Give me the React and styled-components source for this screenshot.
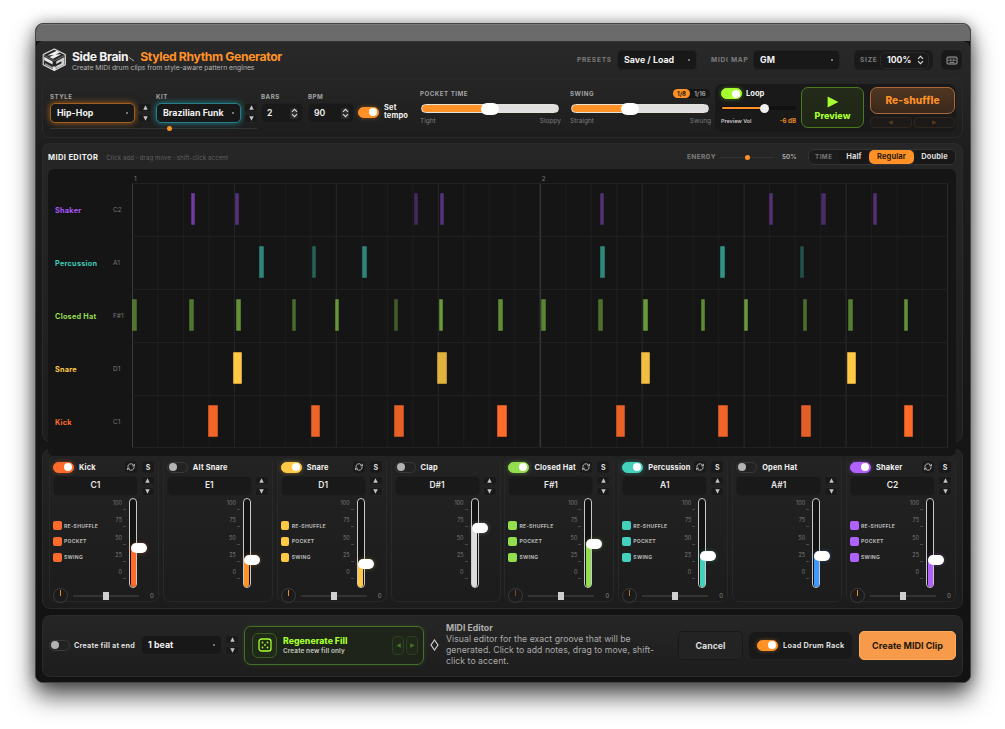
import React from "react";
import styled, { createGlobalStyle } from "styled-components";

const GlobalStyle = createGlobalStyle`
  * {
    box-sizing: border-box;
  }
  body {
    margin: 0;
    background: #ffffff;
    font-family: Inter, "Liberation Sans", sans-serif;
    color: #f2f2f2;
    overflow: hidden;
  }
  button {
    font-family: inherit;
    padding: 0;
    margin: 0;
    cursor: pointer;
  }
`;

const Desktop = styled.div`
  width: 1005px;
  height: 729px;
  padding: 23px 34px 0 35px;
  overflow: hidden;
`;

const Window = styled.div`
  height: 660px;
  border-radius: 8px;
  overflow: hidden;
  border: 1px solid #454545;
  background: #111111;
  box-shadow: 0 13px 25px rgba(0, 0, 0, 0.68), 0 0 14px rgba(0, 0, 0, 0.32);
`;

const TitleBar = styled.div`
  height: 17px;
  background: #6b6b6b;
  border-top: 1px solid #7c7c7c;
`;

const Body = styled.div`
  height: 641px;
  padding: 0 7px 0 6px;
  border-radius: 8px 8px 0 0;
  border-top: 1px solid #343434;
  background: linear-gradient(#292929, #1d1d1d 18%, #161616 60%, #121212);
`;

const Row = styled.div`
  display: flex;
  align-items: center;
`;

const Panel = styled.section`
  border: 1px solid #2a2a2a;
  border-radius: 8px;
  background: linear-gradient(#262626, #1d1d1d);
`;

/* shared controls */

const Label = styled.span`
  font-size: 6.2px;
  line-height: 8px;
  font-weight: 700;
  letter-spacing: 0.5px;
  color: #a3a3a3;
  white-space: nowrap;
`;

const Select = styled.button`
  display: flex;
  flex: none;
  align-items: center;
  justify-content: space-between;
  width: ${(p) => p.$width}px;
  height: 20px;
  padding: 0 6px 1px;
  border: 1px solid ${(p) => p.$glow || "#222222"};
  border-radius: 5px;
  background: #181818;
  color: #f2f2f2;
  font-size: 8.8px;
  font-weight: 700;
  letter-spacing: 0.04px;
  white-space: nowrap;
  box-shadow: ${(p) => (p.$glow ? `0 0 6px ${p.$glow}` : "none")};

  &::after {
    content: "";
    width: 2px;
    height: 2px;
    border-radius: 1px;
    background: #999999;
  }
`;

const StepperBox = styled.div`
  display: grid;
  grid-template-rows: 9px 9px;
  gap: 2px;
  width: 14px;
`;

const StepButton = styled.button`
  display: flex;
  align-items: center;
  justify-content: center;
  border: 1px solid #242424;
  border-radius: 3px;
  background: #191919;
`;

const Toggle = styled.span`
  display: flex;
  flex: none;
  align-items: center;
  justify-content: ${(p) => (p.$on ? "flex-end" : "flex-start")};
  width: 21px;
  height: 11px;
  padding: 0 1px;
  border: 1px solid ${(p) => (p.$on ? p.$on : "#3a3a3a")};
  border-radius: 6px;
  background: ${(p) => p.$on || "#222222"};
  box-shadow: ${(p) => (p.$on ? `0 0 4px ${p.$on}66` : "none")};

  &::after {
    content: "";
    width: 8px;
    height: 8px;
    border-radius: 4px;
    background: ${(p) => (p.$on ? "#ffffff" : "#b2b2b2")};
  }
`;

/* header */

const Header = styled(Row)`
  height: 36px;
`;

const Titles = styled.div`
  flex: none;
  margin-left: 5px;
  width: 505px;
`;

const TitleLine = styled(Row)`
  height: 15px;
  font-size: 12.2px;
  font-weight: 700;
  letter-spacing: -0.37px;
  white-space: nowrap;
`;

const Squiggle = styled.svg`
  margin: 6px 6px 0 1px;
`;

const ProductName = styled.span`
  color: #ff9126;
`;

const Subtitle = styled.div`
  font-size: 6.8px;
  line-height: 8px;
  color: #b4b4b4;
  white-space: nowrap;
`;

const HeaderLabel = styled(Label)`
  flex: none;
  font-size: 6.6px;
  width: ${(p) => p.$width}px;
  margin-left: ${(p) => p.$gap || 0}px;
  color: #7d7d7d;
  letter-spacing: ${(p) => (p.$tight ? "0.3px" : "0.75px")};
`;

const SizeBox = styled(Row)`
  flex: none;
  height: 20px;
  width: 79px;
  margin-left: 14px;
  padding-left: 5px;
  border: 1px solid #1d1d1d;
  border-radius: 5px;
  background: #1a1a1a;
`;

const SizeValue = styled(Row)`
  justify-content: space-between;
  width: 49px;
  height: 17px;
  padding: 0 4px 0 6px;
  border: 1px solid #292929;
  border-radius: 5px;
  font-size: 8.7px;
  font-weight: 700;
`;

const KeyboardButton = styled.button`
  display: flex;
  flex: none;
  align-items: center;
  justify-content: center;
  width: 21px;
  height: 20px;
  margin-left: 8px;
  border: 1px solid #1d1d1d;
  border-radius: 5px;
  background: #191919;
`;

/* controls */

const Controls = styled(Panel)`
  display: flex;
  height: 60px;
  padding-left: 7px;
`;

const SourceGroup = styled.div`
  flex: none;
  width: 208px;
  padding-top: 14px;
`;

const SourceFields = styled.div`
  display: flex;
  justify-content: space-between;
  margin-bottom: 2px;
`;

const SourceField = styled.div`
  display: flex;
  flex-direction: column;
  gap: 2px;
`;

const SourcePair = styled.div`
  display: flex;
  gap: 3px;
`;

const DotRange = styled.div`
  display: flex;
  align-items: center;
  justify-content: ${(p) => (p.$offset ? "flex-start" : "center")};
  width: ${(p) => p.$width}px;
  height: 6px;
  padding-left: ${(p) => p.$offset || 0}px;
  background: linear-gradient(#333333, #333333) center / 100% 1px no-repeat;

  &::after {
    content: "";
    width: 5px;
    height: 5px;
    border-radius: 3px;
    background: #ff9126;
  }
`;

const NumberField = styled.div`
  display: flex;
  flex: none;
  flex-direction: column;
  gap: 2px;
  margin: 14px 0 0 ${(p) => p.$gap}px;
`;

const NumberBox = styled(Row)`
  justify-content: space-between;
  width: ${(p) => p.$width}px;
  height: 20px;
  padding: 0 4px 0 5px;
  border: 1px solid #1e1e1e;
  border-radius: 5px;
  background: #191919;
  font-size: 8.7px;
  font-weight: 600;
`;

const SpinHandle = styled.span`
  display: flex;
  align-items: center;
  justify-content: center;
  width: 8px;
  height: 11px;
  border-radius: 2px;
  background: ${(p) => (p.$plain ? "transparent" : "#2c2c2c")};
`;

const TempoToggle = styled(Row)`
  flex: none;
  gap: 5px;
  height: 22px;
  margin: 22px 0 0 4px;
  width: 62px;
  font-size: 7.5px;
  line-height: 8.2px;
  font-weight: 700;
  letter-spacing: 0.15px;
`;

const FeelGroup = styled.div`
  flex: none;
  width: 140px;
  margin-right: 10px;
  padding-top: 10px;
`;

const FeelHead = styled(Row)`
  justify-content: space-between;
  height: 9px;
`;

const FeelTrack = styled.div`
  display: flex;
  align-items: center;
  height: 9px;
  margin: 6px 1px 4px;
  border: 1px solid #e8e2dc;
  border-radius: 5px;
  background: linear-gradient(90deg, #ff9126 ${(p) => p.$value}%, #e0dede 0);

  &::after {
    content: "";
    width: 18px;
    height: 12px;
    margin-left: calc(${(p) => p.$value}% - 9px);
    border-radius: 6px;
    background: #ffffff;
    flex: none;
  }
`;

const FeelEnds = styled(Row)`
  justify-content: space-between;
  margin-right: -1px;
  font-size: 6.5px;
  line-height: 9px;
  color: #7c7c7c;
`;

const Division = styled.div`
  display: flex;
  height: 9px;
  border-radius: 5px;
  background: #151515;
`;

const DivisionOption = styled.span`
  width: ${(p) => (p.$active ? 17 : 20)}px;
  border-radius: 5px;
  background: ${(p) => (p.$active ? "#ff9126" : "transparent")};
  color: ${(p) => (p.$active ? "#2b1a08" : "#9c9c9c")};
  font-size: 6.1px;
  line-height: 9px;
  font-weight: 700;
  text-align: center;
`;

const PlayBox = styled.div`
  display: flex;
  flex: none;
  width: 241px;
  height: 48px;
  margin: 5px 0 0 -5px;
  padding: 3px 1px 3px 6px;
  border-radius: 7px;
  background: #191919;
`;

const LoopColumn = styled.div`
  width: 75px;
  margin-right: 5px;
`;

const LoopRow = styled(Row)`
  gap: 4px;
  height: 13px;
  font-size: 7.6px;
  font-weight: 700;
`;

const VolumeTrack = styled.div`
  display: flex;
  align-items: center;
  height: 4px;
  margin: 6px 0 7px;
  border: 1px solid #111111;
  border-radius: 2px;
  background: linear-gradient(90deg, #ff9126 58%, #111111 0);

  &::after {
    content: "";
    width: 9px;
    height: 9px;
    margin-left: 38px;
    border-radius: 5px;
    background: #f0f0f0;
    flex: none;
  }
`;

const VolumeText = styled(Row)`
  justify-content: space-between;
  font-size: 5.4px;
  line-height: 8px;
  font-weight: 600;
  color: #c9c9c9;
  white-space: nowrap;
`;

const VolumeValue = styled.span`
  color: #e8872c;
  font-size: 6.2px;
  font-weight: 700;
`;

const PreviewButton = styled.button`
  display: flex;
  flex: none;
  flex-direction: column;
  align-items: center;
  gap: 2px;
  width: 63px;
  height: 41px;
  padding-top: 8px;
  border: 1px solid #4e7a1f;
  border-radius: 7px;
  background: linear-gradient(#242b1a, #1e2615);
  color: #a6ff2e;
  font-size: 9px;
  line-height: 11px;
  font-weight: 800;
`;

const ShuffleColumn = styled.div`
  display: flex;
  flex-direction: column;
  gap: 3px;
  width: 85px;
  margin-left: 6px;
`;

const ShuffleButton = styled.button`
  height: 27px;
  border: 1px solid #a9683a;
  border-radius: 7px;
  background: linear-gradient(#503621, #39281b);
  color: #ff9126;
  font-size: 10.2px;
  font-weight: 800;
  padding-bottom: 2px;
  letter-spacing: 0.1px;
`;

const HistoryRow = styled.div`
  display: grid;
  grid-template-columns: 1fr 1fr;
  gap: 2px;
`;

const HistoryButton = styled.button`
  display: flex;
  align-items: center;
  justify-content: center;
  height: ${(p) => p.$height || 11}px;
  border: 1px solid ${(p) => p.$border || "#2f251d"};
  border-radius: 4px;
  background: ${(p) => p.$fill || "#1c1a18"};
`;

/* midi editor */

const Editor = styled(Panel)`
  position: relative;
  z-index: 1;
  height: 299px;
  margin-top: 5px;
  padding: 4px 6px 0 5px;
`;

const EditorHead = styled(Row)`
  height: 18px;
`;

const EditorTitle = styled.h2`
  margin: 0 8px 0 0;
  font-size: 7.5px;
  font-weight: 700;
  letter-spacing: 0.4px;
  white-space: nowrap;
`;

const EditorHint = styled.span`
  flex: 1;
  font-size: 5.9px;
  letter-spacing: 0.2px;
  color: #616161;
`;

const EnergyValue = styled.span`
  width: 26px;
  margin-left: 8px;
  font-size: 6.4px;
  font-weight: 600;
  color: #b2b2b2;
`;

const Segments = styled(Row)`
  flex: none;
  width: 148px;
  height: 16px;
  border: 1px solid #333333;
  border-radius: 6px;
  background: #1c1c1c;
`;

const Segment = styled.span`
  flex: none;
  width: ${(p) => p.$width}px;
  border-radius: 5px;
  background: ${(p) => (p.$active ? "#ff9126" : "#181818")};
  color: ${(p) => (p.$active ? "#2b1a08" : "#dddddd")};
  font-size: 7.5px;
  line-height: 14px;
  font-weight: 700;
  letter-spacing: 0.1px;
  text-align: center;
`;

const SegmentLabel = styled(Label)`
  width: 30px;
  padding-left: 6px;
  color: #777777;
`;

const Sheet = styled.div`
  height: 287px;
  margin-top: 3px;
  padding-top: 6px;
  border-radius: 6px;
  background: #151515;
`;

const Ruler = styled.div`
  display: flex;
  height: 8px;
  padding-left: 86px;
  font-size: 6.4px;
  line-height: 8px;
  color: #777777;

  span {
    width: 407.8px;
  }
`;

const LaneRow = styled.div`
  display: flex;
  height: 53px;
`;

const LaneName = styled.span`
  flex: none;
  width: 58px;
  padding-left: 7px;
  font-size: 7.3px;
  line-height: 55px;
  font-weight: 700;
  letter-spacing: 0.25px;
  color: ${(p) => p.$color};
  white-space: nowrap;
`;

const LaneNote = styled.span`
  flex: none;
  width: 26px;
  padding-left: 7px;
  font-size: 6.5px;
  line-height: 55px;
  color: #777777;
`;

const Lane = styled.div`
  position: relative;
  flex: none;
  width: 816px;
  border-top: 1px solid #212121;
  border-bottom: ${(p) => (p.$last ? "1px solid #212121" : "none")};
  border-right: 1px solid #2c2c2c;
  background:
    linear-gradient(90deg, #3d3d3d 1px, transparent 0) 0 0 / 407.8px 100%,
    linear-gradient(90deg, #252525 1px, transparent 0) 0 0 / 101.95px 100%,
    linear-gradient(90deg, #1d1d1d 1px, transparent 0) 0 0 / 25.49px 100%;
`;

const Hit = styled.i`
  position: absolute;
  top: 9px;
  width: ${(p) => (p.$wide ? 9.5 : 4.5)}px;
  height: 32px;
  border: 1px solid rgba(0, 0, 0, 0.2);
  border-width: 1px 0.5px;
  border-radius: 1px;
  background: ${(p) => p.$color};
`;

/* channel strips */

const Mixer = styled(Panel)`
  display: grid;
  grid-template-columns: repeat(8, 1fr);
  gap: 3.9px;
  height: 160px;
  margin-top: 7px;
  padding: 5px 6px;
  background: linear-gradient(#222222, #1c1c1c);
`;

const Strip = styled.div`
  min-width: 0;
  height: 147px;
  padding: 4px 3px 0;
  border: 1px solid #282828;
  border-radius: 7px;
  background: linear-gradient(#232323, #1c1c1c);
`;

const StripHead = styled(Row)`
  gap: 5px;
  height: 14px;
  padding-right: 1px;
`;

const StripName = styled.span`
  flex: 1;
  min-width: 0;
  font-size: 7.4px;
  font-weight: 700;
  letter-spacing: 0.2px;
  white-space: nowrap;
`;

const MiniButton = styled.button`
  display: flex;
  align-items: center;
  justify-content: center;
  flex: none;
  width: 12px;
  height: 12px;
  border: 1px solid #1b1b1b;
  border-radius: 3px;
  background: #191919;
  color: #dddddd;
  font-size: 7px;
  font-weight: 700;
`;

const StripNote = styled(Row)`
  gap: 3px;
  margin-top: 2px;
`;

const NoteBox = styled.div`
  width: 85px;
  height: 20px;
  border: 1px solid #1e1e1e;
  border-radius: 5px;
  background: #191919;
  font-size: 8.5px;
  line-height: 17px;
  font-weight: 600;
  text-align: center;
  color: #e8e8e8;
`;

const StripBody = styled.div`
  display: flex;
  height: 90px;
  margin-top: 2px;
`;

const Flags = styled.div`
  display: flex;
  flex: none;
  flex-direction: column;
  gap: 7.5px;
  width: 57px;
  padding-top: 23.5px;
`;

const Flag = styled(Row)`
  gap: 2.5px;
  height: 8.3px;
  font-size: 5.1px;
  font-weight: 700;
  letter-spacing: 0.25px;
  color: #b5b5b5;
  white-space: nowrap;

  &::before {
    content: "";
    width: 8.5px;
    height: 8.5px;
    border-radius: 2px;
    background: ${(p) => p.$color};
  }
`;

const Scale = styled.div`
  display: flex;
  flex: none;
  flex-direction: column;
  width: 17px;
  padding-top: 1px;
`;

const ScaleMark = styled.span`
  display: flex;
  justify-content: flex-end;
  height: 17.25px;
  padding-right: 5px;
  font-size: 5.5px;
  line-height: 8px;
  color: #7b7b7b;
  background: linear-gradient(#484848, #484848) right 1px top 10px / 3px 1px no-repeat;
`;

const Fader = styled.div`
  display: flex;
  flex: none;
  width: 8px;
  height: 90px;
  margin-left: 2px;
  border: 1px solid #c9c9c9;
  border-width: 1px 1.5px;
  border-radius: 4px;
  background: #131313;
`;

const FaderFill = styled.div`
  position: relative;
  align-self: flex-end;
  width: 5px;
  margin-left: 0.5px;
  border-radius: 0 0 2px 2px;
  background: ${(p) => p.$color};

  &::before {
    content: "";
    position: absolute;
    top: -5px;
    left: 0;
    width: 16px;
    height: 10px;
    border-radius: 5px;
    background: #ffffff;
    box-shadow: 0 0 4px ${(p) => p.$color}55;
  }
`;

const PanRow = styled(Row)`
  height: 15px;
`;

const Knob = styled.span`
  display: flex;
  flex: none;
  justify-content: center;
  width: 15px;
  height: 15px;
  padding-top: 1px;
  border: 1px solid #3c3c3c;
  border-radius: 8px;
  background: #1b1b1b;

  &::after {
    content: "";
    width: 1px;
    height: 6px;
    background: ${(p) => p.$tick || "#e8872c"};
  }
`;

const PanTrack = styled.div`
  display: flex;
  align-items: center;
  justify-content: center;
  flex: none;
  width: 66px;
  height: 2px;
  margin: 0 11px 0 5px;
  background: #333333;

  &::after {
    content: "";
    width: 6px;
    height: 8px;
    background: #cfcfcf;
    flex: none;
  }
`;

const PanValue = styled.span`
  font-size: 6px;
  color: #8a8a8a;
`;

/* footer */

const Footer = styled(Panel)`
  display: flex;
  align-items: center;
  height: 62px;
  margin-top: 6px;
  padding: 0 6px 2px;
`;

const FillLabel = styled.span`
  flex: none;
  width: 67px;
  margin-left: 4px;
  font-size: 7.2px;
  font-weight: 700;
  letter-spacing: 0.2px;
  color: #dddddd;
  white-space: nowrap;
`;

const FillSelect = styled(Row)`
  flex: none;
  gap: 3px;
  margin-right: 5px;
`;

const Regenerate = styled(Row)`
  flex: none;
  width: 180px;
  height: 39px;
  padding: 0 5px 0 7px;
  border: 1px solid #47702a;
  border-radius: 7px;
  background: #1e2419;
  box-shadow: 0 0 5px rgba(120, 200, 40, 0.15);
`;

const DiceBox = styled.span`
  display: flex;
  align-items: center;
  justify-content: center;
  width: 25px;
  height: 25px;
  border: 1px solid #3c5c24;
  border-radius: 6px;
  background: #202a18;
`;

const RegenerateText = styled.div`
  flex: 1;
  margin-left: 6px;
  font-size: 6.3px;
  line-height: 8px;
  font-weight: 700;
  letter-spacing: 0.15px;
  color: #b9bdb4;
  white-space: nowrap;
`;

const RegenerateTitle = styled.div`
  font-size: 8.7px;
  line-height: 11px;
  font-weight: 800;
  letter-spacing: 0.05px;
  color: #a6ff2e;
`;

const FillHistory = styled.div`
  display: grid;
  grid-template-columns: 12px 12px;
  gap: 2px;
`;

const Diamond = styled.svg`
  margin-left: 6px;
  flex: none;
`;

const Help = styled.div`
  flex: none;
  width: 225px;
  margin-left: 7px;
  font-size: 8.7px;
  line-height: 11.2px;
  letter-spacing: 0.04px;
  color: #ababab;
  white-space: nowrap;
`;

const HelpTitle = styled.div`
  font-weight: 700;
  color: #b0b0b0;
`;

const CancelButton = styled.button`
  flex: none;
  width: 65px;
  height: 29px;
  margin-left: 7px;
  border: 1px solid #191919;
  border-radius: 5px;
  background: #232323;
  color: #dddddd;
  font-size: 8.8px;
  font-weight: 700;
`;

const RackToggle = styled(Row)`
  flex: none;
  gap: 5px;
  width: 103px;
  height: 27px;
  margin: 0 7px 0 6px;
  padding-left: 8px;
  border-radius: 6px;
  background: #191919;
  color: #dddddd;
  font-size: 7.3px;
  font-weight: 700;
  letter-spacing: 0.25px;
  white-space: nowrap;
`;

const CreateButton = styled.button`
  flex: none;
  width: 97px;
  height: 29px;
  border: 1px solid #ffaa5c;
  border-radius: 5px;
  background: #f79a49;
  color: #24170b;
  font-size: 9px;
  font-weight: 700;
`;

const ORANGE = "#ff9126";

const LANES = [
  {
    name: "Shaker",
    note: "C2",
    color: "#a855f7",
    hits: [
      [58.7, 0.62], [102.7, 0.45], [281.6, 0.33], [307.9, 0.45],
      [467.5, 0.42], [636.8, 0.42], [689.3, 0.36], [740.7, 0.42],
    ],
  },
  {
    name: "Percussion",
    note: "A1",
    color: "#3fcab6",
    hits: [
      [127.3, 0.62], [179.8, 0.42], [230.2, 0.62], [468, 0.64],
      [588, 0.7], [667.9, 0.32],
    ],
  },
  {
    name: "Closed Hat",
    note: "F#1",
    color: "#93de4e",
    hits: [
      [0.3, 0.48], [57, 0.48], [104.3, 0.62], [159.5, 0.42],
      [202.9, 0.62], [261.8, 0.34], [306.8, 0.66], [366.3, 0.6],
      [409, 0.55], [466.4, 0.45], [511.4, 0.66], [568.7, 0.58],
      [611.6, 0.66], [670.5, 0.44], [716, 0.52], [771.8, 0.62],
    ],
  },
  {
    name: "Snare",
    note: "D1",
    color: "#ffc845",
    wide: true,
    hits: [[100.5, 1], [305.2, 0.88], [508.7, 0.94], [714.5, 1]],
  },
  {
    name: "Kick",
    note: "C1",
    color: "#ff6b2b",
    wide: true,
    hits: [
      [76.4, 0.94], [178.7, 0.92], [262.3, 0.89], [365.2, 1],
      [483.5, 0.9], [586.4, 0.93], [669.4, 0.88], [771.8, 1],
    ],
  },
];

const CHANNELS = [
  { name: "Kick", note: "C1", color: "#ff6b2b", level: 39.5, on: true },
  { name: "Alt Snare", note: "E1", color: "#ff9326", level: 27.5 },
  { name: "Snare", note: "D1", color: "#ffc845", level: 23.5, on: true },
  { name: "Clap", note: "D#1", color: "#dddddd", level: 59.5 },
  { name: "Closed Hat", note: "F#1", color: "#93de4e", level: 43.5, on: true, tick: "#7a4a25" },
  { name: "Percussion", note: "A1", color: "#43d1bd", level: 31.5, on: true, tick: "#b86f2d" },
  { name: "Open Hat", note: "A#1", color: "#3f98ff", level: 31.5 },
  { name: "Shaker", note: "C2", color: "#b062ff", level: 27.5, on: true },
];

const Triangle = ({ dir = "up", size = 5, color = "#c4c4c4" }) => {
  const turn = { up: 0, right: 90, down: 180, left: 270 }[dir];
  return (
    <svg width={size} height={size} viewBox="0 0 10 10">
      <path d="M5 0.5L9.5 9.5H0.5Z" fill={color} transform={`rotate(${turn} 5 5)`} />
    </svg>
  );
};

const Stepper = () => (
  <StepperBox>
    <StepButton>
      <Triangle />
    </StepButton>
    <StepButton>
      <Triangle dir="down" />
    </StepButton>
  </StepperBox>
);

const Spin = ({ plain }) => (
  <SpinHandle $plain={plain}>
    <svg width="7" height="10" viewBox="0 0 7 10" fill="none" stroke="#dddddd" strokeWidth="1.1">
      <path d="M1 3.8L3.5 1.3L6 3.8M1 6.2L3.5 8.7L6 6.2" />
    </svg>
  </SpinHandle>
);

const Logo = () => (
  <svg width="25" height="24" viewBox="0 0 25 24" fill="none">
    <path
      d="M12.3 1L23.3 6.4V16.8L12.3 22.6L1.2 16.8V6.4Z"
      stroke="#e4e4e4"
      strokeWidth="1.1"
      strokeLinejoin="round"
    />
    <path d="M1.5 7L12.3 12.8L23.2 7" stroke="#8d8d8d" strokeWidth="0.7" />
    <path
      d="M5.2 7.4L14.6 2.8L18 4.6L13.4 6.4L19.4 6.2L11 10.8L7.4 9L12 7Z"
      fill="#f0f0f0"
    />
    <path d="M2.2 8.8L10.6 13.4V16.6L2.2 12.3Z" fill="#e5e5e5" />
    <path d="M3 15L10.5 19V21L3 16.8Z" fill="#999999" />
    <path d="M22.4 9L14.2 13.4V16L19.4 13.3V15.4L14.2 18V20.8L22.4 16.6Z" fill="#cfcfcf" />
    <path d="M12.3 14V22" stroke="#222222" strokeWidth="0.8" />
    <path d="M10.6 18.5H13.8V22H10.6Z" fill="#e4e4e4" />
  </svg>
);

const KeyboardIcon = () => (
  <svg width="12" height="9" viewBox="0 0 12 9" fill="none">
    <rect x="1" y="1" width="10" height="7" rx="1" stroke="#b5b5b5" strokeWidth="0.9" />
    <path
      d="M2.4 3H9.8M2.4 4.5H9.8"
      stroke="#b5b5b5"
      strokeWidth="0.8"
      strokeDasharray="1 0.5"
    />
    <path d="M3.5 6.3H8.5" stroke="#b5b5b5" strokeWidth="0.8" />
  </svg>
);

const RefreshIcon = () => (
  <svg width="8" height="8" viewBox="0 0 24 24" fill="none" stroke="#c4c4c4" strokeWidth="2.8">
    <path d="M2.5 13A9.5 9.5 0 0 1 19 5.5L22 8.5M22 2.5V8.5H16" />
    <path d="M21.5 11A9.5 9.5 0 0 1 5 18.5L2 15.5M2 21.5V15.5H8" />
  </svg>
);

const DiceIcon = () => (
  <svg width="14" height="14" viewBox="0 0 14 14" fill="#a6ff2e">
    <rect x="1" y="1" width="12" height="12" rx="2.6" fill="none" stroke="#a6ff2e" strokeWidth="1.3" />
    <circle cx="4.5" cy="4.5" r="0.9" />
    <circle cx="9.5" cy="4.5" r="0.9" />
    <circle cx="7" cy="7" r="0.9" />
    <circle cx="4.5" cy="9.5" r="0.9" />
    <circle cx="9.5" cy="9.5" r="0.9" />
  </svg>
);

const Channel = ({ channel }) => (
  <Strip>
    <StripHead>
      <Toggle $on={channel.on && channel.color} />
      <StripName>{channel.name}</StripName>
      {channel.on && (
        <>
          <MiniButton>
            <RefreshIcon />
          </MiniButton>
          <MiniButton>S</MiniButton>
        </>
      )}
    </StripHead>
    <StripNote>
      <NoteBox>{channel.note}</NoteBox>
      <Stepper />
    </StripNote>
    <StripBody>
      <Flags>
        {channel.on &&
          ["RE-SHUFFLE", "POCKET", "SWING"].map((flag) => (
            <Flag key={flag} $color={channel.color}>
              {flag}
            </Flag>
          ))}
      </Flags>
      <Scale>
        {[100, 75, 50, 25, 0].map((mark) => (
          <ScaleMark key={mark}>{mark}</ScaleMark>
        ))}
      </Scale>
      <Fader>
        <FaderFill $color={channel.color} style={{ height: channel.level }} />
      </Fader>
    </StripBody>
    {channel.on && (
      <PanRow>
        <Knob $tick={channel.tick} />
        <PanTrack />
        <PanValue>0</PanValue>
      </PanRow>
    )}
  </Strip>
);

const TopHeader = () => (
  <Header>
    <Logo />
    <Titles>
      <TitleLine>
        Side Brain
        <Squiggle width="5" height="6" viewBox="0 0 5 6">
          <path d="M0.3 1.4L1.8 2.8M2.4 3.2L3.2 3M3.2 3.4L4.6 5.2" stroke="#cccccc" fill="none" />
        </Squiggle>
        <ProductName>Styled Rhythm Generator</ProductName>
      </TitleLine>
      <Subtitle>Create MIDI drum clips from style-aware pattern engines</Subtitle>
    </Titles>
    <HeaderLabel $width={40}>PRESETS</HeaderLabel>
    <Select $width={80}>Save / Load</Select>
    <HeaderLabel $width={42} $gap={14}>
      MIDI MAP
    </HeaderLabel>
    <Select $width={87}>GM</Select>
    <SizeBox>
      <HeaderLabel $width={20}>SIZE</HeaderLabel>
      <SizeValue>
        100%
        <Spin plain />
      </SizeValue>
    </SizeBox>
    <KeyboardButton>
      <KeyboardIcon />
    </KeyboardButton>
  </Header>
);

const ControlPanel = () => (
  <Controls>
    <SourceGroup>
      <SourceFields>
        <SourceField>
          <Label>STYLE</Label>
          <SourcePair>
            <Select $width={85} $glow="#a05f1c">
              Hip-Hop
            </Select>
            <Stepper />
          </SourcePair>
        </SourceField>
        <SourceField>
          <Label>KIT</Label>
          <SourcePair>
            <Select $width={85} $glow="#23808a">
              Brazilian Funk
            </Select>
            <Stepper />
          </SourcePair>
        </SourceField>
      </SourceFields>
      <DotRange $width={207} $offset={117} />
    </SourceGroup>
    <NumberField $gap={3}>
      <Label>BARS</Label>
      <NumberBox $width={42}>
        2<Spin />
      </NumberBox>
    </NumberField>
    <NumberField $gap={5}>
      <Label>BPM</Label>
      <NumberBox $width={46}>
        90
        <Spin />
      </NumberBox>
    </NumberField>
    <TempoToggle>
      <Toggle $on={ORANGE} />
      <span>
        Set
        <br />
        tempo
      </span>
    </TempoToggle>
    <FeelGroup>
      <FeelHead>
        <Label>POCKET TIME</Label>
      </FeelHead>
      <FeelTrack $value={50} />
      <FeelEnds>
        <span>Tight</span>
        <span>Sloppy</span>
      </FeelEnds>
    </FeelGroup>
    <FeelGroup>
      <FeelHead>
        <Label>SWING</Label>
        <Division>
          <DivisionOption $active>1/8</DivisionOption>
          <DivisionOption>1/16</DivisionOption>
        </Division>
      </FeelHead>
      <FeelTrack $value={43} />
      <FeelEnds>
        <span>Straight</span>
        <span>Swung</span>
      </FeelEnds>
    </FeelGroup>
    <PlayBox>
      <LoopColumn>
        <LoopRow>
          <Toggle $on="#a6ff2e" />
          Loop
        </LoopRow>
        <VolumeTrack />
        <VolumeText>
          Preview Vol
          <VolumeValue>-6 dB</VolumeValue>
        </VolumeText>
      </LoopColumn>
      <PreviewButton>
        <Triangle dir="right" size={12} color="#a6ff2e" />
        Preview
      </PreviewButton>
      <ShuffleColumn>
        <ShuffleButton>Re-shuffle</ShuffleButton>
        <HistoryRow>
          <HistoryButton>
            <Triangle dir="left" color="#5c3a1e" />
          </HistoryButton>
          <HistoryButton>
            <Triangle dir="right" color="#5c3a1e" />
          </HistoryButton>
        </HistoryRow>
      </ShuffleColumn>
    </PlayBox>
  </Controls>
);

const MidiEditor = () => (
  <Editor>
    <EditorHead>
      <EditorTitle>MIDI EDITOR</EditorTitle>
      <EditorHint>Click add · drag move · shift-click accent</EditorHint>
      <HeaderLabel $width={33} $tight>
        ENERGY
      </HeaderLabel>
      <DotRange $width={54} />
      <EnergyValue>50%</EnergyValue>
      <Segments>
        <SegmentLabel>TIME</SegmentLabel>
        <Segment $width={30}>Half</Segment>
        <Segment $width={45} $active>
          Regular
        </Segment>
        <Segment $width={41}>Double</Segment>
      </Segments>
    </EditorHead>
    <Sheet>
      <Ruler>
        <span>1</span>
        <span>2</span>
      </Ruler>
      {LANES.map((lane, i) => (
        <LaneRow key={lane.name}>
          <LaneName $color={lane.color}>{lane.name}</LaneName>
          <LaneNote>{lane.note}</LaneNote>
          <Lane $last={i === LANES.length - 1}>
            {lane.hits.map(([x, velocity]) => (
              <Hit
                key={x}
                $wide={lane.wide}
                $color={lane.color}
                style={{ left: x, opacity: velocity }}
              />
            ))}
          </Lane>
        </LaneRow>
      ))}
    </Sheet>
  </Editor>
);

const FooterBar = () => (
  <Footer>
    <Toggle />
    <FillLabel>Create fill at end</FillLabel>
    <FillSelect>
      <Select $width={81}>1 beat</Select>
      <Stepper />
    </FillSelect>
    <Regenerate>
      <DiceBox>
        <DiceIcon />
      </DiceBox>
      <RegenerateText>
        <RegenerateTitle>Regenerate Fill</RegenerateTitle>
        Create new fill only
      </RegenerateText>
      <FillHistory>
        <HistoryButton $height={19} $border="#2c3f20" $fill="#1f2819">
          <Triangle dir="left" color="#47752a" />
        </HistoryButton>
        <HistoryButton $height={19} $border="#2c3f20" $fill="#1f2819">
          <Triangle dir="right" color="#47752a" />
        </HistoryButton>
      </FillHistory>
    </Regenerate>
    <Diamond width="9" height="12" viewBox="0 0 9 12">
      <path d="M4.5 1L8 6L4.5 11L1 6Z" fill="none" stroke="#cccccc" strokeWidth="1.2" />
    </Diamond>
    <Help>
      <HelpTitle>MIDI Editor</HelpTitle>
      Visual editor for the exact groove that will be
      <br />
      generated. Click to add notes, drag to move, shift-
      <br />
      click to accent.
    </Help>
    <CancelButton>Cancel</CancelButton>
    <RackToggle>
      <Toggle $on={ORANGE} />
      Load Drum Rack
    </RackToggle>
    <CreateButton>Create MIDI Clip</CreateButton>
  </Footer>
);

export default function App() {
  return (
    <Desktop>
      <GlobalStyle />
      <Window>
        <TitleBar />
        <Body>
          <TopHeader />
          <ControlPanel />
          <MidiEditor />
          <Mixer>
            {CHANNELS.map((channel) => (
              <Channel key={channel.name} channel={channel} />
            ))}
          </Mixer>
          <FooterBar />
        </Body>
      </Window>
    </Desktop>
  );
}
